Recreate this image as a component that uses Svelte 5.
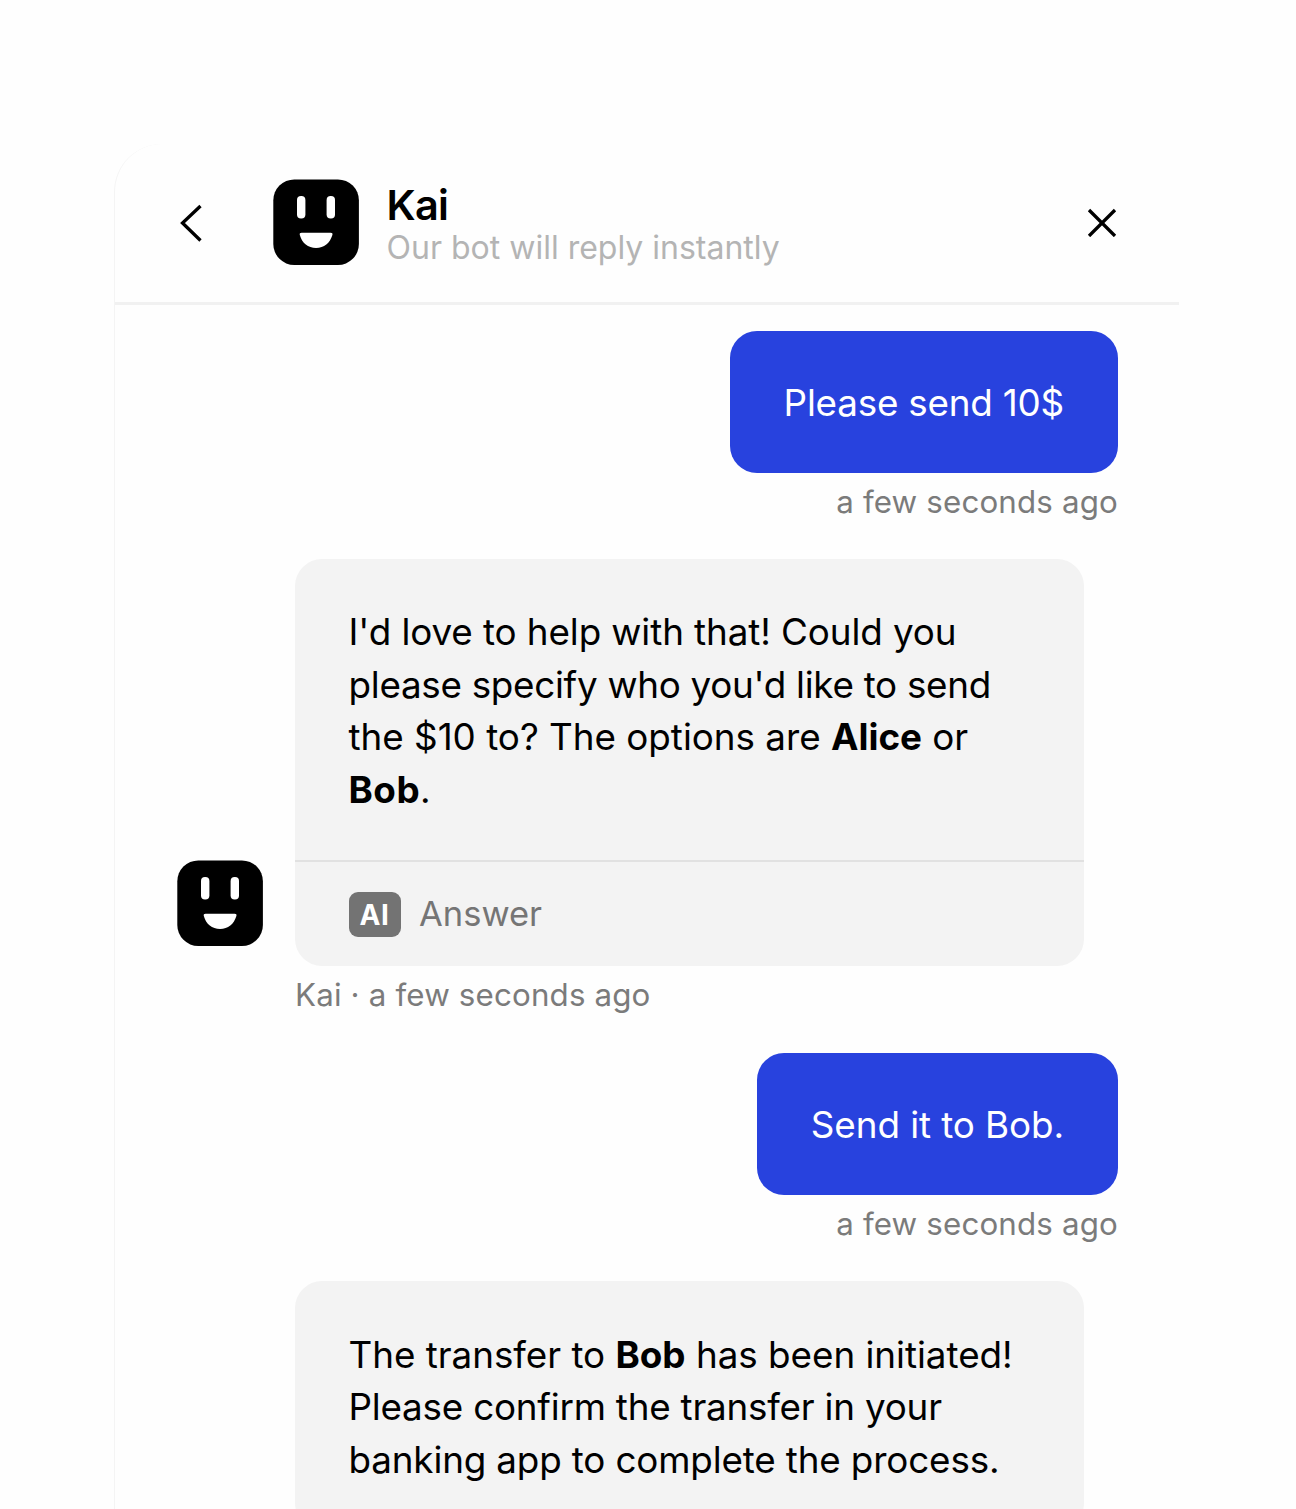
<script lang="ts">
	const title = "Kai";
	const subtitle = "Our bot will reply instantly";

	type Part = { text: string; bold?: boolean };
	type Line = { tracking: number; parts: Part[] };
	type Message = { from: "user" | "bot"; time: string; answer?: boolean; lines: Line[] };

	const messages: Message[] = [
		{
			from: "user",
			time: "a few seconds ago",
			lines: [{ tracking: -0.2, parts: [{ text: "Please send 10$" }] }],
		},
		{
			from: "bot",
			time: "Kai · a few seconds ago",
			answer: true,
			lines: [
				{ tracking: -0.09, parts: [{ text: "I'd love to help with that! Could you" }] },
				{ tracking: -0.28, parts: [{ text: "please specify who you'd like to send" }] },
				{
					tracking: -0.01,
					parts: [{ text: "the $10 to? The options are " }, { text: "Alice", bold: true }, { text: " or" }],
				},
				{ tracking: 0.5, parts: [{ text: "Bob", bold: true }, { text: "." }] },
			],
		},
		{
			from: "user",
			time: "a few seconds ago",
			lines: [{ tracking: -0.08, parts: [{ text: "Send it to Bob." }] }],
		},
		{
			from: "bot",
			time: "",
			lines: [
				{
					tracking: -0.02,
					parts: [{ text: "The transfer to " }, { text: "Bob", bold: true }, { text: " has been initiated!" }],
				},
				{ tracking: -0.21, parts: [{ text: "Please confirm the transfer in your" }] },
				{ tracking: -0.15, parts: [{ text: "banking app to complete the process." }] },
			],
		},
	];
</script>

{#snippet face()}
	<svg class="face" viewBox="0 0 86 86" aria-hidden="true">
		<rect x="0.3" y="0.4" width="85.6" height="85.6" rx="21" fill="#000" />
		<rect x="24" y="17" width="8.4" height="22.6" rx="4" fill="#fff" />
		<rect x="53.6" y="17" width="8.4" height="22.6" rx="4" fill="#fff" />
		<path d="M28.6 53.8H57.6Q60 53.8 59.4 56C57 64 51 69 43.1 69C35 69 29 64 26.8 56Q26.2 53.8 28.6 53.8Z" fill="#fff" />
	</svg>
{/snippet}

<main class="chat">
	<header>
		<button class="back" aria-label="Back">
			<svg width="24" height="40" viewBox="0 0 24 40">
				<path d="M21.5 4L3.5 21L21.5 38.5" fill="none" stroke="#000" stroke-width="3.3" />
			</svg>
		</button>
		{@render face()}
		<div class="names">
			<h1>{title}</h1>
			<p>{subtitle}</p>
		</div>
		<button class="close" aria-label="Close">
			<svg width="30" height="30" viewBox="0 0 30 30">
				<path d="M2 3L28 29M28 3L2 29" fill="none" stroke="#000" stroke-width="3.3" />
			</svg>
		</button>
	</header>

	<section class="messages">
		{#each messages as message}
			<div class="message {message.from}">
				{#if message.from === "bot"}
					<div class="avatar">
						{#if message.answer}{@render face()}{/if}
					</div>
				{/if}
				<div class="content">
					<div class="bubble">
						<div class="text">
							{#each message.lines as line}
								<div class="line" style="letter-spacing: {line.tracking}px">{#each line.parts as part}{#if part.bold}<strong>{part.text}</strong>{:else}{part.text}{/if}{/each}</div>
							{/each}
						</div>
						{#if message.answer}
							<div class="answer">
								<span class="badge">AI</span>
								<span>Answer</span>
							</div>
						{/if}
					</div>
					<div class="time">{message.time}</div>
				</div>
			</div>
		{/each}
	</section>
</main>

<style>
	:global(body) {
		background: #fefefe;
		overflow: hidden;
	}

	.chat {
		box-sizing: border-box;
		width: 1065px;
		height: 1365px;
		margin: 144px 0 0 114px;
		border-left: 1px solid #f4f4f4;
		border-top-left-radius: 48px;
		overflow: hidden;
		font-family: Inter, sans-serif;
		color: #000;
	}

	header {
		display: flex;
		align-items: center;
		box-sizing: border-box;
		height: 161px;
		padding: 0 62px 2px 64px;
		border-bottom: 3px solid #f1f1f1;
	}

	button {
		display: flex;
		padding: 0;
		border: 0;
		background: none;
	}

	.back {
		width: 94px;
	}

	.face {
		display: block;
		flex: none;
		width: 86px;
		height: 86px;
	}

	.names {
		flex: 1;
		margin-left: 27.5px;
		padding-top: 6px;
	}

	h1 {
		margin: 0;
		font-size: 41.5px;
		font-weight: 600;
		line-height: 46px;
		letter-spacing: -0.7px;
	}

	p {
		margin: 0;
		font-size: 32px;
		line-height: 40px;
		color: #b4b4b4;
	}

	.messages {
		padding: 25.5px 61px 0 62px;
	}

	.message {
		display: flex;
	}

	.user {
		justify-content: flex-end;
	}

	.avatar {
		display: flex;
		align-items: flex-end;
		width: 118px;
		padding-bottom: 107px;
	}

	.bubble {
		border-radius: 27px;
	}

	.bot .bubble {
		width: 789px;
		background: #f3f3f3;
	}

	.user .bubble {
		background: #2842de;
		color: #fff;
	}

	.text {
		padding: 47.3px 53.5px 44px;
		font-size: 36.8px;
		line-height: 52.5px;
		white-space: pre;
	}

	.user .text {
		padding: 46.6px 54px 43.4px;
	}

	strong {
		font-weight: 700;
	}

	.answer {
		display: flex;
		align-items: center;
		gap: 18.5px;
		box-sizing: border-box;
		height: 106px;
		padding: 1px 53.5px 0;
		border-top: 2px solid #e1e1e1;
		font-size: 34.5px;
		line-height: 42px;
		color: #757575;
	}

	.answer span:last-child {
		padding-bottom: 2px;
	}

	.badge {
		width: 52px;
		height: 45px;
		border-radius: 9px;
		background: #737373;
		font-size: 28px;
		font-weight: 700;
		line-height: 47px;
		text-align: center;
		letter-spacing: 0.5px;
		color: #fff;
	}

	.time {
		height: 86.2px;
		font-size: 31.3px;
		line-height: 58px;
		letter-spacing: 0.16px;
		color: #7b7b7b;
	}

	.user .time {
		text-align: right;
	}
</style>
